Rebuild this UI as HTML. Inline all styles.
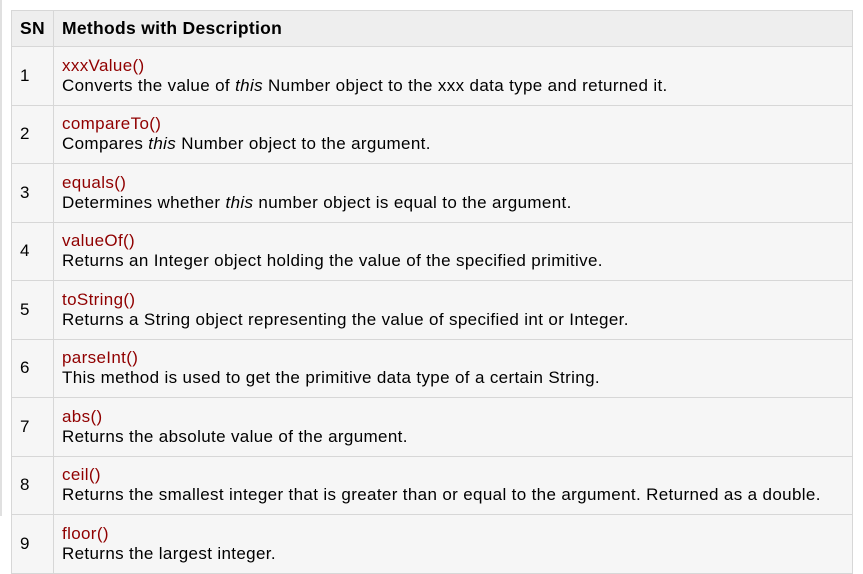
<!DOCTYPE html>
<html><head><style>
body{margin:0;width:863px;height:516px;overflow:hidden;background:#fff;font-family:"Liberation Sans",Arial,sans-serif;font-size:17px;letter-spacing:0.35px;color:#000;position:relative}
.edge{position:absolute;left:0;top:0;width:2px;height:516px;background:#e0e0e0}
table{position:absolute;left:11px;top:10px;width:842px;border-collapse:collapse;background:#f6f6f6}
td,th{border:1px solid #d7d7d7;padding:0 8px;vertical-align:middle;text-align:left}
th{background:#eeeeee;height:35px;font-weight:bold;font-size:17.5px;letter-spacing:0.3px}
td{height:57.5px;line-height:20px}
td.n{width:25px}
.m{color:#900000}
</style></head><body><div class="edge"></div>
<table>
<tr><th class="n">SN</th><th>Methods with Description</th></tr>
<tr><td class="n">1</td><td><span class="m">xxxValue()</span><br>Converts the value of <i>this</i> Number object to the xxx data type and returned it.</td></tr>
<tr><td class="n">2</td><td><span class="m">compareTo()</span><br>Compares <i>this</i> Number object to the argument.</td></tr>
<tr><td class="n">3</td><td><span class="m">equals()</span><br>Determines whether <i>this</i> number object is equal to the argument.</td></tr>
<tr><td class="n">4</td><td><span class="m">valueOf()</span><br>Returns an Integer object holding the value of the specified primitive.</td></tr>
<tr><td class="n">5</td><td><span class="m">toString()</span><br>Returns a String object representing the value of specified int or Integer.</td></tr>
<tr><td class="n">6</td><td><span class="m">parseInt()</span><br>This method is used to get the primitive data type of a certain String.</td></tr>
<tr><td class="n">7</td><td><span class="m">abs()</span><br>Returns the absolute value of the argument.</td></tr>
<tr><td class="n">8</td><td><span class="m">ceil()</span><br>Returns the smallest integer that is greater than or equal to the argument. Returned as a double.</td></tr>
<tr><td class="n">9</td><td><span class="m">floor()</span><br>Returns the largest integer.</td></tr>
</table>
</body></html>
